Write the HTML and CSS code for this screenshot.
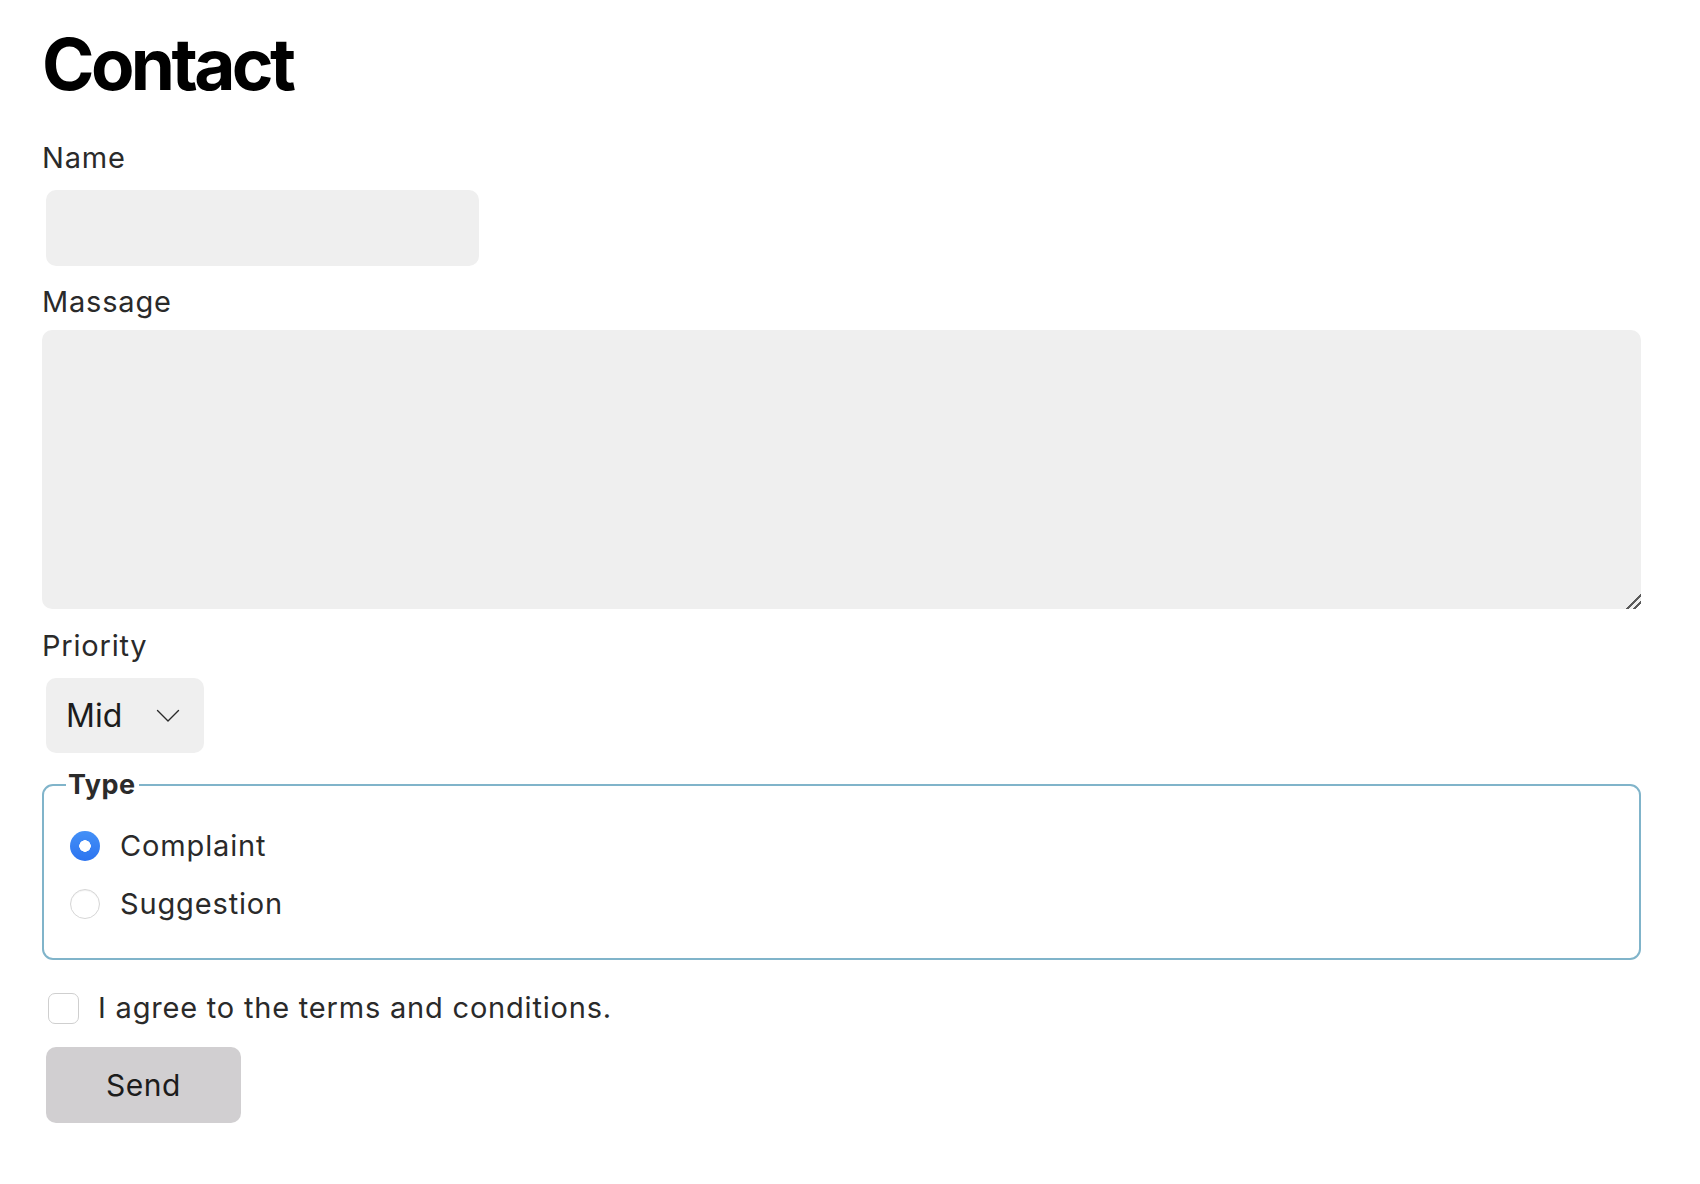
FILE: index.html
```html
<!DOCTYPE html>
<html lang="en">
<head>
<meta charset="utf-8">
<title>Contact</title>
<link rel="stylesheet" href="styles.css">
</head>
<body>
<main class="page">
  <h1 class="title">Contact</h1>
  <form class="form">
    <label class="label label-name" for="name">Name</label>
    <input class="input" id="name" type="text">
    <label class="label label-msg" for="msg">Massage</label>
    <textarea class="textarea" id="msg"></textarea>
    <label class="label label-pri" for="pri">Priority</label>
    <div class="select-wrap">
      <select class="select" id="pri">
        <option>Low</option>
        <option selected>Mid</option>
        <option>High</option>
      </select>
      <svg class="chevron" width="24" height="14" viewBox="0 0 24 14" aria-hidden="true"><path d="M1.5 1.5 L12 12 L22.5 1.5" fill="none" stroke="#2a2a2a" stroke-width="1.4" stroke-linecap="round" stroke-linejoin="round"/></svg>
    </div>
    <fieldset class="fieldset">
      <legend class="legend">Type</legend>
      <label class="radio-row"><input class="radio" type="radio" name="type" checked><span>Complaint</span></label>
      <label class="radio-row"><input class="radio" type="radio" name="type"><span>Suggestion</span></label>
    </fieldset>
    <label class="check-row"><input class="check" type="checkbox"><span>I agree to the terms and conditions.</span></label>
    <button class="btn" type="submit">Send</button>
  </form>
</main>
</body>
</html>
```

FILE: styles.css
```css
* { box-sizing: border-box; }
html, body { margin: 0; padding: 0; background: #fff; }
body { font-family: Inter, "Noto Sans", "Liberation Sans", sans-serif; color: #2b2b2b; }

.page { padding: 25px 59px 0 42px; }

.title {
  margin: 0;
  font-size: 71px;
  line-height: 79px;
  font-weight: 700;
  color: #000;
  letter-spacing: -3.6px;
}

.form { display: flex; flex-direction: column; align-items: flex-start; }

.label {
  display: block;
  font-size: 29px;
  line-height: 36px;
  color: #2a2a2a;
  margin-left: 0;
  letter-spacing: 0.8px;
}
.label-name { margin-top: 36px; }
.label-msg { margin-top: 18px; }
.label-pri { margin-top: 19px; }

.input {
  display: block;
  margin: 14px 0 0 4px;
  width: 433px;
  height: 76px;
  border: none;
  border-radius: 10px;
  background: #efefef;
  outline: none;
  font: inherit;
}

.textarea {
  display: block;
  margin-top: 10px;
  width: 100%;
  height: 279px;
  border: none;
  border-radius: 10px;
  background: #efefef;
  outline: none;
  font: inherit;
  resize: both;
}
.textarea::-webkit-resizer {
  background:
    linear-gradient(135deg, transparent 0 47%, #5a5a5a 47% 57%, transparent 57% 71%, #5a5a5a 71% 81%, transparent 81%);
}

.select-wrap {
  position: relative;
  margin: 14px 0 0 4px;
  width: 158px;
  height: 75px;
}
.select {
  appearance: none;
  -webkit-appearance: none;
  width: 100%;
  height: 100%;
  border: none;
  border-radius: 10px;
  background: #efefef;
  padding: 0 0 0 20px;
  font-family: inherit;
  font-size: 32px;
  color: #1c1c1c;
  letter-spacing: 0;
  outline: none;
}
.chevron {
  position: absolute;
  left: 110px;
  top: 31px;
  pointer-events: none;
}

.fieldset {
  margin: 17px 0 0 0;
  width: 100%;
  border: 2px solid #80b4ca;
  border-radius: 11px;
  padding: 17px 0 25px 22px;
}
.legend {
  padding: 0 3px 0 2px;
  font-size: 27px;
  line-height: 30px;
  font-weight: 700;
  color: #2b2b2b;
  letter-spacing: 0.5px;
}

.radio-row {
  display: flex;
  align-items: center;
  height: 58px;
  font-size: 29px;
  line-height: 36px;
  color: #2a2a2a;
  letter-spacing: 0.85px;
}
.radio {
  appearance: none;
  -webkit-appearance: none;
  margin: 0 20px 0 4px;
  width: 30px;
  height: 30px;
  border-radius: 50%;
  border: 1px solid #d6d6d6;
  background: #fff;
  box-shadow: inset 0 1px 1px rgba(0,0,0,0.06);
  flex: none;
}
.radio:checked {
  border: none;
  background: radial-gradient(circle at center, #fff 0, #fff 5.5px, transparent 6px),
              linear-gradient(#4390f7, #2d74f0);
  box-shadow: none;
}

.check-row {
  display: flex;
  align-items: center;
  margin-top: 30px;
  height: 36px;
  font-size: 29px;
  line-height: 36px;
  color: #2a2a2a;
  letter-spacing: 0.8px;
}
.check {
  appearance: none;
  -webkit-appearance: none;
  margin: 0 19px 0 6px;
  width: 31px;
  height: 31px;
  border: 1px solid #cfcfcf;
  border-radius: 7px;
  background: #fff;
  flex: none;
}

.btn {
  margin: 21px 0 0 4px;
  width: 195px;
  height: 76px;
  border: none;
  border-radius: 10px;
  background: #d1cfd1;
  font-family: inherit;
  font-size: 30px;
  color: #1c1c1c;
  letter-spacing: 0.5px;
  padding: 0;
}
```
